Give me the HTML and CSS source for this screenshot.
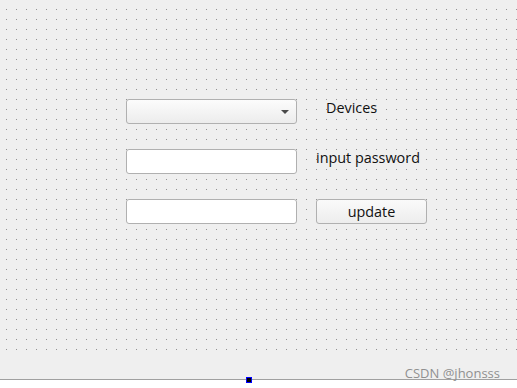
FILE: index.html
```html
<!DOCTYPE html>
<html>
<head>
    <meta charset="UTF-8">
    <link rel="stylesheet" href="styles.css">
</head>
<body>
    <div class="designer">
        <div class="form-area">
            <div class="form-grid">
                <div class="combo"><span class="combo-arrow"></span></div>
                <div class="field-label label-devices">Devices</div>
                <input type="text" class="line-edit">
                <div class="field-label">input password</div>
                <input type="text" class="line-edit">
                <button class="push-btn">update</button>
            </div>
        </div>
        <div class="form-footer"></div>
        <div class="resize-handle"></div>
        <div class="watermark">CSDN @jhonsss</div>
    </div>
</body>
</html>
```

FILE: styles.css
```css
body {
    margin: 0;
    background: #ffffff;
    font-family: "Open Sans", "DejaVu Sans", sans-serif;
    font-size: 14.4px;
    color: #111111;
}
.designer {
    position: relative;
    width: 517px;
    height: 388px;
    overflow: hidden;
}
.form-area {
    height: 351px;
    box-sizing: border-box;
    padding: 99px 0 0 126px;
    background: conic-gradient(at 1px 1px, #efefef 75%, #929292 0) 6px 9px / 10px 10px;
}
.form-grid {
    display: grid;
    grid-template-columns: 171px 111px;
    grid-auto-rows: 25px;
    column-gap: 19px;
    row-gap: 25px;
}
.combo {
    position: relative;
    box-sizing: border-box;
    border: 1px solid #b0b0b0;
    border-radius: 3px;
    background: linear-gradient(#fcfcfc, #ececec);
}
.combo-arrow {
    position: absolute;
    right: 7px;
    top: 10px;
    width: 0;
    height: 0;
    border-left: 4px solid transparent;
    border-right: 4px solid transparent;
    border-top: 4px solid #4a4a4a;
}
.line-edit {
    box-sizing: border-box;
    width: 171px;
    height: 25px;
    margin: 0;
    border: 1px solid #b0b0b0;
    border-radius: 3px;
    background: #ffffff;
}
.field-label {
    line-height: 18px;
    white-space: nowrap;
}
.label-devices {
    padding-left: 10px;
}
.push-btn {
    box-sizing: border-box;
    height: 25px;
    margin: 0;
    border: 1px solid #b0b0b0;
    border-radius: 3px;
    background: linear-gradient(#fafafa, #ededed);
    font-family: inherit;
    font-size: 14.4px;
    color: #111111;
    padding: 0;
}
.form-footer {
    height: 28px;
    background: #efefef;
    border-bottom: 1px solid #a0a0a0;
}
.resize-handle {
    position: absolute;
    left: 246px;
    top: 377px;
    width: 4px;
    height: 4px;
    background: #000000;
    border: 1px solid #0000ff;
}
.watermark {
    position: absolute;
    right: 17px;
    top: 364px;
    font-size: 13px;
    color: #909090;
}
```
